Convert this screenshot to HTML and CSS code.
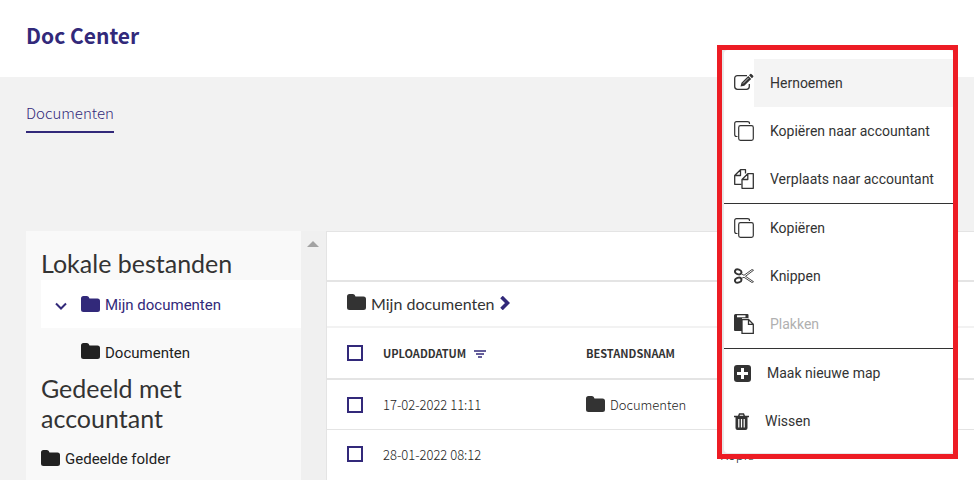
FILE: index.html
```html
<!DOCTYPE html>
<html lang="nl">
<head>
    <meta charset="UTF-8">
    <meta name="viewport" content="width=device-width, initial-scale=1.0">
    <title>Doc Center</title>
    <link rel="stylesheet" href="styles.css">
</head>
<body>
    <!-- shared icons -->
    <svg class="sprite" aria-hidden="true">
        <symbol id="folder" viewBox="0 0 19 16">
            <path d="M0 2.500Q0 0 2.500 0H6Q8 0 8.500 2.500H16.500Q19 2.500 19 5V13.500Q19 16 16.500 16H2.500Q0 16 0 13.500Z"/>
        </symbol>
        <symbol id="copy" viewBox="0 0 20 20">
            <path d="M3.500 15.500H2.500Q.7 15.500 .7 13.500V2.500Q.7.7 2.500.7H13.500Q15.500.7 15.500 2.500V3" fill="none" stroke="currentColor" stroke-width="1.200"/>
            <rect x="4.700" y="4.700" width="14.600" height="14.600" rx="1.800" fill="none" stroke="currentColor" stroke-width="1.200"/>
        </symbol>
    </svg>

    <header class="header">
        <h1>Doc Center</h1>
    </header>

    <nav class="tabs">
        <a href="#" class="tab">Documenten</a>
    </nav>

    <main class="content">
        <!-- folder tree -->
        <aside class="sidebar">
            <div class="tree">
                <h2>Lokale bestanden</h2>
                <a href="#" class="node active">
                    <svg class="arrow" viewBox="0 0 12 8"><path d="M1 1.500L6 6.500L11 1.500" fill="none" stroke="currentColor" stroke-width="2"/></svg>
                    <svg class="folder"><use href="#folder"/></svg>
                    <span>Mijn documenten</span>
                </a>
                <a href="#" class="node child">
                    <svg class="folder"><use href="#folder"/></svg>
                    <span>Documenten</span>
                </a>
                <h2>Gedeeld met accountant</h2>
                <a href="#" class="node shared">
                    <svg class="folder"><use href="#folder"/></svg>
                    <span>Gedeelde folder</span>
                </a>
            </div>
            <div class="scrollbar">
                <svg viewBox="0 0 12 6"><path d="M0 6L6 0L12 6Z"/></svg>
            </div>
        </aside>

        <!-- file list -->
        <section class="files">
            <div class="toolbar"></div>
            <div class="breadcrumb">
                <svg class="folder"><use href="#folder"/></svg>
                <a href="#">Mijn documenten</a>
                <svg class="next" viewBox="0 0 10 14"><path d="M1.500 1L7.500 7L1.500 13" fill="none" stroke="currentColor" stroke-width="3.600"/></svg>
            </div>
            <table>
                <thead>
                    <tr>
                        <th class="check"><input type="checkbox" aria-label="Alles selecteren"></th>
                        <th class="date">Uploaddatum
                            <svg class="sort" viewBox="0 0 12 8"><path d="M0 1H12M2 4H10M4 7H8" fill="none" stroke="currentColor" stroke-width="1.500"/></svg>
                        </th>
                        <th class="name">Bestandsnaam</th>
                        <th></th>
                    </tr>
                </thead>
                <tbody>
                    <tr>
                        <td class="check"><input type="checkbox" aria-label="17-02-2022 11:11"></td>
                        <td>17-02-2022 11:11</td>
                        <td>
                            <a href="#" class="file"><svg class="folder"><use href="#folder"/></svg>Documenten</a>
                        </td>
                        <td></td>
                    </tr>
                    <tr>
                        <td class="check"><input type="checkbox" aria-label="28-01-2022 08:12"></td>
                        <td>28-01-2022 08:12</td>
                        <td></td>
                        <td>Kopie</td>
                    </tr>
                </tbody>
            </table>
        </section>
    </main>

    <!-- context menu -->
    <div class="menu-frame">
        <div class="menu">
            <button type="button" class="hover">
                <svg viewBox="0 0 20 20">
                    <path d="M13 2.700H3.500Q.7 2.700 .7 5.500V13.500Q.7 16.300 3.500 16.300H12.500Q15.300 16.300 15.300 13.500V11" fill="none" stroke="currentColor" stroke-width="1.300"/>
                    <path d="M6.500 13.500L7.500 9.800L14.300 3L17.200 5.900L10.300 12.700Z M15 2.300L16.300 1Q17 .5 17.700 1.200L19.200 2.700Q19.700 3.300 19.200 3.900L17.900 5.200Z"/>
                    <path d="M9 10.500L14.500 5" fill="none" stroke="#fff" stroke-width=".7"/>
                </svg>
                <span>Hernoemen</span>
            </button>
            <button type="button">
                <svg><use href="#copy"/></svg>
                <span>Kopiëren naar accountant</span>
            </button>
            <button type="button">
                <svg viewBox="0 0 20 20">
                    <g fill="none" stroke="currentColor" stroke-width="1.300" stroke-linejoin="round">
                        <path d="M7.500 15.300H.7V6.500L6.500.7H11.500V4.500M6.500.7V6.500H.7"/>
                        <path d="M8 10.500L13.800 4.700H19.300V19.300H8ZM13.800 4.700V10.500H8"/>
                    </g>
                </svg>
                <span>Verplaats naar accountant</span>
            </button>
            <hr>
            <button type="button">
                <svg><use href="#copy"/></svg>
                <span>Kopiëren</span>
            </button>
            <button type="button">
                <svg viewBox="0 0 20 20">
                    <g fill="none" stroke="currentColor">
                        <ellipse cx="4.200" cy="5.800" rx="3.300" ry="2.400" stroke-width="1.900" transform="rotate(20 4.200 5.800)"/>
                        <ellipse cx="4.200" cy="14.200" rx="3.300" ry="2.400" stroke-width="1.900" transform="rotate(-20 4.200 14.200)"/>
                        <path d="M7 7.500L10 9.300L18 3.500L19.500 4.300L11.500 10.300L19.500 15.700L18 16.500L10 11.300L7 12.500" stroke-width=".9"/>
                    </g>
                </svg>
                <span>Knippen</span>
            </button>
            <button type="button" disabled>
                <svg viewBox="0 0 20 20">
                    <path d="M1.500 0H13.500Q14.500 0 14.500 1V4H8V17H1Q0 17 0 16V1.500Q0 0 1.500 0Z"/>
                    <path d="M3 1.300H11.500V3.300H3Z" fill="#fff"/>
                    <path d="M8 5.500H14.500L19.300 10.300V19.300H8ZM14.500 5.500V10.300H19.300" fill="#fff" stroke="currentColor" stroke-width="1.300"/>
                </svg>
                <span>Plakken</span>
            </button>
            <hr>
            <button type="button">
                <svg class="plus" viewBox="0 0 17 17">
                    <rect width="17" height="17" rx="3"/>
                    <path d="M8.500 3V14M3 8.500H14" fill="none" stroke="#fff" stroke-width="3"/>
                </svg>
                <span>Maak nieuwe map</span>
            </button>
            <button type="button">
                <svg class="trash" viewBox="0 0 15 17">
                    <path d="M0 3.500H15M4.500 3.500L5.500 1H9.500L10.500 3.500" fill="none" stroke="currentColor" stroke-width="1.500"/>
                    <path d="M1.500 4H13.500V15Q13.500 17 11.500 17H3.500Q1.500 17 1.500 15Z"/>
                    <path d="M4.800 6V14.500M7.500 6V14.500M10.200 6V14.500" fill="none" stroke="#fff" stroke-width="1.200"/>
                </svg>
                <span>Wissen</span>
            </button>
        </div>
    </div>
</body>
</html>
```
FILE: styles.css
```css
* {
    box-sizing: border-box;
}
body {
    margin: 0;
    height: 100vh;
    display: flex;
    flex-direction: column;
    overflow: hidden;
    background: #f2f2f2;
    color: #333;
    font-family: "Noto Sans CJK SC", sans-serif;
}
a {
    color: inherit;
    text-decoration: none;
}
svg {
    fill: currentColor;
    flex: none;
}
.sprite {
    position: absolute;
    width: 0;
    height: 0;
}
.folder {
    width: 19px;
    height: 16px;
    margin-bottom: 3px;
}

/* header */
.header {
    flex: none;
    height: 77px;
    padding: 20px 26px;
    background: #fff;
}
.header h1 {
    margin: 0;
    font-size: 21px;
    line-height: 30px;
    color: #32297a;
}
.tabs {
    flex: none;
    display: flex;
    align-items: flex-start;
    height: 154px;
    padding: 24px 26px;
}
.tab {
    height: 32px;
    border-bottom: 2px solid #32297a;
    font-size: 15px;
    font-weight: 300;
    line-height: 24px;
    color: #32297a;
}

/* folder tree */
.content {
    flex: 1;
    min-height: 0;
    display: flex;
    padding-left: 26px;
}
.sidebar {
    flex: none;
    width: 300px;
    display: flex;
    background: #f9f9f9;
}
.tree {
    flex: 1;
    padding: 17px 0 0 15px;
    font-family: Roboto, sans-serif;
    font-size: 15px;
}
.tree h2 {
    margin: 0;
    padding-right: 60px;
    font-family: Lato, sans-serif;
    font-size: 25px;
    font-weight: 400;
    line-height: 30px;
}
.tree h2:first-child {
    padding-right: 0;
    margin-bottom: 2px;
}
.node {
    display: flex;
    align-items: center;
    gap: 5px;
    height: 48px;
    padding-top: 2px;
    color: #212121;
}
.node.active {
    background: #fff;
    color: #32297a;
}
.node.child {
    padding: 4px 0 0 40px;
    height: 45px;
}
.node.shared {
    height: 50px;
}
.arrow {
    width: 12px;
    height: 8px;
    margin: 2px 9px 0 14px;
}
.scrollbar {
    width: 25px;
    padding: 10px 6px;
    background: #f0f0f0;
    color: #a3a3a3;
}
.scrollbar svg {
    display: block;
    width: 12px;
    height: 6px;
}

/* file list */
.files {
    flex: 1;
    min-width: 0;
    background: #fff;
    border: 1px solid #e4e4e4;
    border-width: 1px 0 0 1px;
}
.toolbar {
    height: 50px;
    border-bottom: 2px solid #e4e4e4;
}
.breadcrumb {
    display: flex;
    align-items: center;
    gap: 5px;
    height: 46px;
    padding: 0 0 2px 20px;
    border-bottom: 2px solid #f2f2f2;
    font-family: Lato, sans-serif;
    font-size: 16px;
}
.next {
    width: 10px;
    height: 14px;
    color: #32297a;
}
table {
    width: 100%;
    table-layout: fixed;
    border-collapse: separate;
    border-spacing: 0;
    font-size: 13px;
}
th,
td {
    height: 50px;
    padding: 0;
    text-align: left;
    border-bottom: 1px solid #e4e4e4;
}
td {
    font-weight: 300;
    color: #222;
}
tr:last-child td {
    height: 48px;
    border-bottom: 0;
}
th,
thead tr:last-child th {
    height: 52px;
    border-bottom-width: 2px;
    font-size: 11px;
    text-transform: uppercase;
}
.check {
    width: 56px;
    padding-left: 20px;
}
th.date {
    width: 203px;
}
th.name {
    width: 134px;
}
.sort {
    width: 12px;
    height: 8px;
    margin-left: 5px;
    color: #32297a;
}
input[type=checkbox] {
    display: block;
    appearance: none;
    width: 16px;
    height: 16px;
    margin: 0;
    border: 2px solid #32297a;
    background: #fff;
}
.file {
    display: flex;
    align-items: center;
    gap: 5px;
}
.file .folder {
    color: #333;
    margin-bottom: 2px;
}

/* context menu */
.menu-frame {
    position: absolute;
    top: 45px;
    right: 16px;
    width: 241px;
    border: 5px solid #ed1c24;
    background: #e8e8e8;
}
.menu {
    margin: 0 0 1px 2px;
    padding: 9px 0 8px;
    background: #fff;
    border-radius: 4px;
}
.menu button {
    display: flex;
    align-items: center;
    width: 100%;
    height: 48px;
    padding: 0 0 0 10px;
    border: 0;
    background: none;
    color: #333;
    font-family: Roboto, sans-serif;
    font-size: 14px;
    text-align: left;
}
.menu button svg {
    width: 20px;
    height: 20px;
}
.menu button svg.plus {
    width: 17px;
    height: 17px;
}
.menu button svg.trash {
    width: 15px;
    height: 17px;
}
.menu button span {
    flex: 1;
    padding-left: 16px;
    line-height: 48px;
}
.menu .hover {
    background: linear-gradient(#f4f4f4, #f4f4f4) 30px 0 no-repeat;
}
.menu button:disabled span {
    color: #b0b0b0;
}
.menu hr {
    margin: 0;
    border: 0;
    border-top: 1px solid #333;
}
```
